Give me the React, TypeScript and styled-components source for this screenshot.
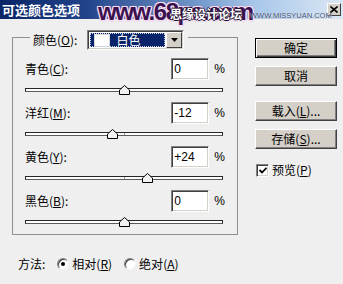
import styled, { createGlobalStyle } from 'styled-components';

const GlobalStyle = createGlobalStyle`
  html, body {
    margin: 0;
    padding: 0;
  }
  body {
    width: 343px;
    height: 284px;
    overflow: hidden;
    background: #efefef;
    font-family: 'Noto Sans CJK SC', 'Liberation Sans', sans-serif;
    font-size: 12px;
    color: #000;
  }
`;

type Channel = {
  name: string;
  key: string;
  value: number;
  text: string;
};

const channels: Channel[] = [
  { name: '青色', key: 'C', value: 0, text: '0' },
  { name: '洋红', key: 'M', value: -12, text: '-12' },
  { name: '黄色', key: 'Y', value: 24, text: '+24' },
  { name: '黑色', key: 'B', value: 0, text: '0' },
];

const Dialog = styled.div`
  width: 343px;
  height: 284px;
  display: flex;
  flex-direction: column;
  background: #efefef;
`;

const TitleBar = styled.div`
  position: relative;
  flex: none;
  height: 19px;
  display: flex;
  align-items: center;
  padding: 0 2px;
  background: linear-gradient(
    to right,
    #0a2566 0%,
    #21438a 25%,
    #6b92c6 55%,
    #a9c8ea 75%,
    #dbe7f4 100%
  );
`;

const Title = styled.span`
  color: #fff;
  font-weight: 700;
  font-size: 13px;
  line-height: 19px;
  white-space: nowrap;
`;

// watermarks stamped over the caption
const SiteMark = styled.span`
  position: absolute;
  left: 98px;
  top: 0;
  font: 700 24px/24px 'Liberation Sans', sans-serif;
  letter-spacing: -1.5px;
  color: #3b1250;
  white-space: nowrap;
  text-shadow: 1px 0 0 #f6dcf2, -1px 0 0 #f6dcf2, 0 1px 0 #f6dcf2,
    0 -1px 0 #f6dcf2, 1px 1px 0 #f6dcf2, -1px -1px 0 #f6dcf2,
    1px -1px 0 #f6dcf2, -1px 1px 0 #f6dcf2, 0 0 3px #b77ac8;
`;

const ForumMark = styled.span`
  position: absolute;
  left: 170px;
  top: 7px;
  font-weight: 700;
  font-size: 12px;
  line-height: 14px;
  color: #fff;
  white-space: nowrap;
  text-shadow: 1px 0 0 #2a1638, -1px 0 0 #2a1638, 0 1px 0 #2a1638,
    0 -1px 0 #2a1638;
`;

const UrlMark = styled.span`
  position: absolute;
  left: 250px;
  top: 11px;
  font: 400 7.5px/9px 'Liberation Sans', sans-serif;
  color: #3e4d6e;
  white-space: nowrap;
  text-shadow: 0 0 1px #ffffff;
`;

const CloseButton = styled.div`
  margin-left: auto;
  width: 14px;
  height: 13px;
  box-sizing: border-box;
  display: flex;
  align-items: center;
  justify-content: center;
  background: #d4d0c8;
  border: 1px solid;
  border-color: #fff #404040 #404040 #fff;
`;

const Body = styled.div`
  flex: 1;
  display: flex;
  padding: 5px 0 0 12px;
`;

const MainColumn = styled.div`
  width: 226px;
  display: flex;
  flex-direction: column;
`;

const GroupBox = styled.fieldset`
  margin: 0;
  width: 226px;
  min-width: 0;
  box-sizing: border-box;
  padding: 8px 11px 0 12px;
  border: 1px solid #8f8f8f;
`;

const Legend = styled.legend`
  margin-left: 5px;
  padding: 6px 4px 0 3px;
  display: flex;
  align-items: center;
  gap: 10px;
  line-height: 14px;
`;

const Select = styled.div`
  width: 97px;
  height: 20px;
  box-sizing: border-box;
  display: flex;
  border: 1px solid;
  border-color: #808080 #fff #fff #808080;
`;

const SelectWell = styled.div`
  flex: 1;
  display: flex;
  border: 1px solid;
  border-color: #404040 #d4d0c8 #d4d0c8 #404040;
  background: #fff;
`;

const SelectValue = styled.div`
  flex: 1;
  margin: 1px;
  display: flex;
  align-items: center;
  padding-left: 4px;
  gap: 6px;
  background: #0a246a;
  outline: 1px dotted #c8d0e8;
  outline-offset: -1px;
  color: #fff;
`;

const Swatch = styled.span`
  width: 14px;
  height: 11px;
  background: #fff;
  border: 1px solid #d8d8d8;
`;

const ArrowButton = styled.div`
  width: 16px;
  box-sizing: border-box;
  display: flex;
  align-items: center;
  justify-content: center;
  background: #d4d0c8;
  border: 1px solid;
  border-color: #fff #404040 #404040 #fff;
`;

const Field = styled.div`
  display: flex;
  flex-direction: column;
`;

const FieldHeader = styled.div`
  width: 200px;
  height: 22px;
  display: flex;
  align-items: center;
`;

const FieldLabel = styled.span`
  flex: 1;
  line-height: 14px;
`;

const NumberBox = styled.div`
  width: 38px;
  height: 22px;
  box-sizing: border-box;
  padding-left: 2px;
  display: flex;
  align-items: center;
  background: #fff;
  border: 1px solid;
  border-color: #808080 #fff #fff #808080;
  box-shadow: inset 1px 1px 0 #404040, inset -1px -1px 0 #d4d0c8;
  font-family: 'Liberation Sans', sans-serif;
  font-size: 12px;
`;

const Percent = styled.span`
  margin-left: 5px;
  font-family: 'Liberation Sans', sans-serif;
`;

const SliderArea = styled.div`
  position: relative;
  width: 198px;
  height: 22px;
`;

const Track = styled.div`
  position: relative;
  margin-top: 8px;
  height: 4px;
  box-sizing: border-box;
  background: #fdfdfd;
  border: 1px solid #262626;
  border-bottom-color: #5a5a5a;

  &::after {
    content: '';
    position: absolute;
    left: 98px;
    top: 0;
    width: 1px;
    height: 2px;
    background: #9a9a9a;
  }
`;

const Thumb = styled.svg`
  position: absolute;
  top: 5px;
  margin-left: -5.5px;
`;

const MethodRow = styled.div`
  height: 16px;
  margin-top: 21px;
  padding-left: 6px;
  display: flex;
  align-items: center;
  line-height: 14px;
`;

const MethodLabel = styled.span`
  margin-right: 12px;
`;

const RadioOption = styled.span`
  display: flex;
  align-items: center;
  gap: 3px;
  margin-right: 12px;
`;

const RadioCircle = styled.span<{ $checked?: boolean }>`
  position: relative;
  width: 12px;
  height: 12px;
  box-sizing: border-box;
  border-radius: 50%;
  background: #fff;
  border: 1px solid;
  border-color: #808080 #f4f4f4 #f4f4f4 #808080;
  box-shadow: inset 1px 1px 0 #404040;

  &::after {
    content: '';
    display: ${({ $checked }) => ($checked ? 'block' : 'none')};
    position: absolute;
    left: 3px;
    top: 3px;
    width: 4px;
    height: 4px;
    border-radius: 50%;
    background: #000;
  }
`;

const SideColumn = styled.div`
  width: 82px;
  margin-left: 17px;
  padding-top: 14px;
  display: flex;
  flex-direction: column;
`;

const PushButton = styled.div<{ $isDefault?: boolean; $gap?: number }>`
  height: 20px;
  margin-top: ${({ $gap }) => $gap ?? 0}px;
  box-sizing: border-box;
  display: flex;
  align-items: center;
  justify-content: center;
  background: #d4d0c8;
  border: 1px solid;
  border-color: ${({ $isDefault }) =>
    $isDefault ? '#000' : '#fff #404040 #404040 #fff'};
  box-shadow: ${({ $isDefault }) =>
    $isDefault
      ? 'inset 1px 1px 0 #fff, inset -1px -1px 0 #404040, inset -2px -2px 0 #808080'
      : 'inset -1px -1px 0 #808080'};
  line-height: 14px;
`;

const CheckRow = styled.div`
  margin-top: 14px;
  padding-left: 1px;
  display: flex;
  align-items: center;
  gap: 3px;
  line-height: 14px;
`;

const CheckBox = styled.span`
  width: 13px;
  height: 13px;
  box-sizing: border-box;
  display: flex;
  align-items: center;
  justify-content: center;
  background: #fff;
  border: 1px solid;
  border-color: #808080 #fff #fff #808080;
  box-shadow: inset 1px 1px 0 #404040, inset -1px -1px 0 #d4d0c8;
`;

const Key = ({ k }: { k: string }) => (
  <>
    (<u>{k}</u>)
  </>
);

const SliderThumb = ({ value }: { value: number }) => (
  <Thumb
    width="11"
    height="10"
    viewBox="0 0 11 10"
    style={{ left: `${(value + 100) / 2}%` }}
  >
    <polygon
      points="5.5,0.5 10.5,5 10.5,9.5 0.5,9.5 0.5,5"
      fill="#f2f2f2"
      stroke="#000"
      strokeWidth="1"
    />
  </Thumb>
);

export default function App() {
  return (
    <Dialog>
      <GlobalStyle />
      <TitleBar>
        <Title>可选颜色选项</Title>
        <SiteMark>www.68ps.com</SiteMark>
        <ForumMark>思缘设计论坛</ForumMark>
        <UrlMark>WWW.MISSYUAN.COM</UrlMark>
        <CloseButton>
          <svg width="8" height="7" viewBox="0 0 8 7">
            <path d="M0.5 0.5 L7.5 6.5 M7.5 0.5 L0.5 6.5" stroke="#000" strokeWidth="1.6" />
          </svg>
        </CloseButton>
      </TitleBar>
      <Body>
        <MainColumn>
          <GroupBox>
            <Legend>
              <span>
                颜色<Key k="O" />:
              </span>
              <Select>
                <SelectWell>
                  <SelectValue>
                    <Swatch />
                    <span>白色</span>
                  </SelectValue>
                  <ArrowButton>
                    <svg width="7" height="4" viewBox="0 0 7 4">
                      <polygon points="0,0 7,0 3.5,4" fill="#000" />
                    </svg>
                  </ArrowButton>
                </SelectWell>
              </Select>
            </Legend>
            {channels.map((ch) => (
              <Field key={ch.key}>
                <FieldHeader>
                  <FieldLabel>
                    {ch.name}
                    <Key k={ch.key} />:
                  </FieldLabel>
                  <NumberBox>{ch.text}</NumberBox>
                  <Percent>%</Percent>
                </FieldHeader>
                <SliderArea>
                  <Track />
                  <SliderThumb value={ch.value} />
                </SliderArea>
              </Field>
            ))}
          </GroupBox>
          <MethodRow>
            <MethodLabel>方法:</MethodLabel>
            <RadioOption>
              <RadioCircle $checked />
              <span>
                相对<Key k="R" />
              </span>
            </RadioOption>
            <RadioOption>
              <RadioCircle />
              <span>
                绝对<Key k="A" />
              </span>
            </RadioOption>
          </MethodRow>
        </MainColumn>
        <SideColumn>
          <PushButton $isDefault>确定</PushButton>
          <PushButton $gap={8}>取消</PushButton>
          <PushButton $gap={15}>
            <span>
              载入<Key k="L" />...
            </span>
          </PushButton>
          <PushButton $gap={8}>
            <span>
              存储<Key k="S" />...
            </span>
          </PushButton>
          <CheckRow>
            <CheckBox>
              <svg width="8" height="7" viewBox="0 0 8 7">
                <path d="M0.5 3 L3 5.5 L7.5 0.8" fill="none" stroke="#000" strokeWidth="1.8" />
              </svg>
            </CheckBox>
            <span>
              预览<Key k="P" />
            </span>
          </CheckRow>
        </SideColumn>
      </Body>
    </Dialog>
  );
}
